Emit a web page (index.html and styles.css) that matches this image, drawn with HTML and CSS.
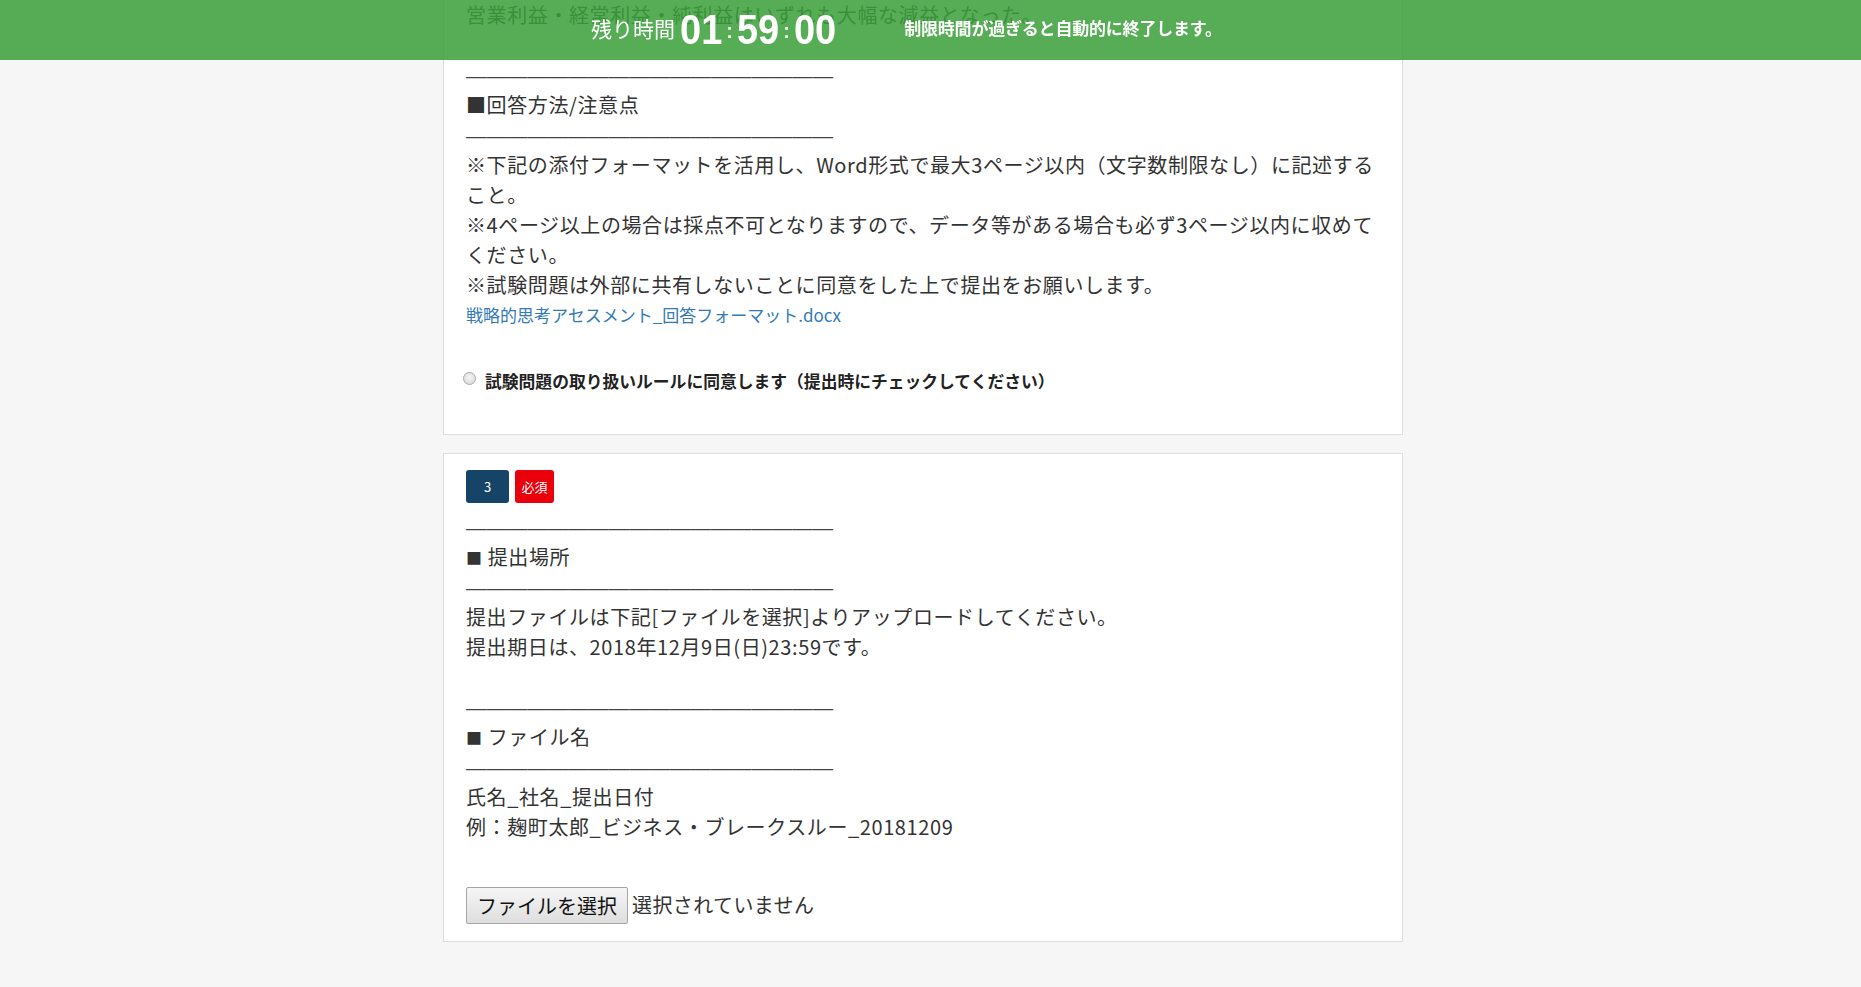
FILE: index.html
```html
<!DOCTYPE html>
<html lang="ja">
<head>
    <meta charset="UTF-8">
    <meta name="viewport" content="width=device-width, initial-scale=1.0">
    <title>戦略的思考アセスメント | 回答提出</title>
    <link rel="stylesheet" href="styles.css">
</head>
<body>
    <!-- Timer bar (fixed) -->
    <div class="timer-bar">
        <div class="timer-inner">
            <div class="timer">
                <span class="timer-label">残り時間</span>
                <span class="timer-num">01</span><span class="timer-sep">:</span><span class="timer-num">59</span><span class="timer-sep">:</span><span class="timer-num">00</span>
            </div>
            <p class="timer-note">制限時間が過ぎると自動的に終了します。</p>
        </div>
    </div>

    <div class="container">
        <!-- Question 2 (scrolled) -->
        <div class="question-card question-card--cut">
            <p class="q-text">
                営業利益・経常利益・純利益はいずれも大幅な減益となった。<br>
                <br>
                <span class="rule">——————————————————</span><br>
                ■回答方法/注意点<br>
                <span class="rule">——————————————————</span><br>
                ※下記の添付フォーマットを活用し、Word形式で最大3ページ以内（文字数制限なし）に記述すること。<br>
                ※4ページ以上の場合は採点不可となりますので、データ等がある場合も必ず3ページ以内に収めてください。<br>
                ※試験問題は外部に共有しないことに同意をした上で提出をお願いします。
            </p>
            <p class="q-link"><a class="q-file" href="#">戦略的思考アセスメント_回答フォーマット.docx</a></p>

            <label class="agree">
                <input type="radio" name="agree">
                <span>試験問題の取り扱いルールに同意します（提出時にチェックしてください）</span>
            </label>
        </div>

        <!-- Question 3 -->
        <div class="question-card">
            <div class="q-badges">
                <span class="badge badge-num">3</span>
                <span class="badge badge-required">必須</span>
            </div>
            <p class="q-text">
                <span class="rule">——————————————————</span><br>
                <span class="mark">■</span> 提出場所<br>
                <span class="rule">——————————————————</span><br>
                提出ファイルは下記[ファイルを選択]よりアップロードしてください。<br>
                提出期日は、2018年12月9日(日)23:59です。<br>
                <br>
                <span class="rule">——————————————————</span><br>
                <span class="mark">■</span> ファイル名<br>
                <span class="rule">——————————————————</span><br>
                氏名_社名_提出日付<br>
                例：麹町太郎_ビジネス・ブレークスルー_20181209
            </p>

            <div class="file-field">
                <label class="file-btn" for="answer-file">ファイルを選択</label>
                <input type="file" id="answer-file" class="file-input">
                <span class="file-name">選択されていません</span>
            </div>
        </div>
    </div>
</body>
</html>
```

FILE: styles.css
```css
/* base */
body {
    margin: 0;
    background: #f6f6f6;
    color: #333;
    font-family: "Noto Sans CJK JP", "Noto Sans", sans-serif;
    font-size: 20px;
    line-height: 30px;
}

p {
    margin: 0;
}

/* timer bar */
.timer-bar {
    position: fixed;
    top: 0;
    left: 0;
    right: 0;
    height: 60px;
    background: rgba(58, 160, 58, 0.86);
    color: #fff;
    z-index: 10;
}

.timer-inner {
    width: 975px;
    height: 60px;
    margin: 0 auto;
    padding-left: 148px;
    box-sizing: border-box;
    display: flex;
    align-items: center;
}

.timer {
    display: flex;
    align-items: center;
    height: 60px;
}

.timer-label {
    font-size: 21px;
    margin-right: 5px;
    margin-top: -4px;
}

.timer-num {
    font-family: "Liberation Sans", Arial, sans-serif;
    font-weight: bold;
    font-size: 38px;
    line-height: 1;
    transform: scaleY(1.1);
}

.timer-sep {
    font-family: "Liberation Sans", Arial, sans-serif;
    font-weight: bold;
    font-size: 20px;
    line-height: 1;
    padding: 0 4px;
    color: #eef6ee;
    margin-top: 2px;
}

.timer-note {
    margin-left: 68px;
    margin-top: -4px;
    font-size: 17px;
    font-weight: bold;
    letter-spacing: -0.2px;
}

/* cards */
.container {
    width: 975px;
    margin: 0 auto;
    padding-right: 15px;
    box-sizing: border-box;
    padding-bottom: 40px;
}

.question-card {
    background: #fff;
    border: 1px solid #ddd;
    padding: 16px 22px 17px;
    margin-bottom: 18px;
}

.question-card--cut {
    border-top: none;
    padding-top: 0;
    padding-bottom: 38px;
}

.q-text {
    letter-spacing: 0.6px;
}

.rule {
    font-family: "Liberation Sans", Arial, sans-serif;
    font-size: 20.4px;
    line-height: 1;
    letter-spacing: 0;
    color: #444;
}

.mark {
    font-size: 16px;
    line-height: 1;
    vertical-align: 1px;
}

.q-link {
    line-height: 28px;
}

.q-file {
    color: #337ab7;
    font-size: 17px;
    text-decoration: none;
}

.agree {
    display: flex;
    align-items: center;
    margin-top: 37px;
    font-size: 16.8px;
    font-weight: bold;
    color: #222;
}

.agree input {
    appearance: none;
    -webkit-appearance: none;
    margin: -6px 9px 0 -3px;
    width: 13px;
    height: 13px;
    border: 1px solid #a9a9a9;
    border-radius: 50%;
    background: radial-gradient(circle at 50% 40%, #f4f4f4, #d6d6d6);
    box-sizing: border-box;
}

/* badges */
.q-badges {
    display: flex;
    gap: 6px;
    margin-bottom: 9px;
}

.badge {
    display: inline-block;
    height: 33px;
    line-height: 33px;
    border-radius: 3px;
    color: #fff;
    font-size: 13px;
    text-align: center;
}

.badge-num {
    width: 43px;
    background: #154466;
}

.badge-required {
    width: 39px;
    background: #e9000b;
}

/* file field */
.file-field {
    display: flex;
    align-items: center;
    margin-top: 45px;
}

.file-input {
    display: none;
}

.file-btn {
    display: inline-block;
    width: 162px;
    height: 37px;
    line-height: 35px;
    box-sizing: border-box;
    text-align: center;
    border: 1px solid #a6a6a6;
    border-radius: 2px;
    background: linear-gradient(#f6f6f6, #dedede);
    color: #111;
    font-size: 20px;
}

.file-name {
    margin-left: 4px;
    margin-top: -2px;
    letter-spacing: 0.4px;
}
```
